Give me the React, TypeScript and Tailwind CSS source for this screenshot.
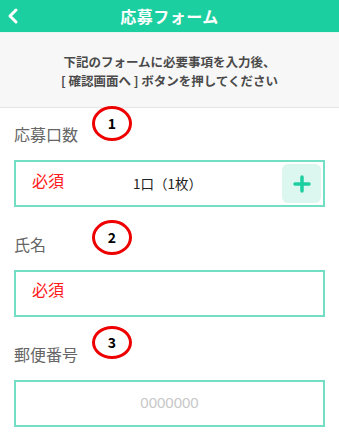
import { ChevronLeft, Plus } from "lucide-react";

const font = {
	fontFamily: '"Noto Sans CJK JP", "Noto Sans", sans-serif',
};

const Marker = ({ n, className }: { n: number; className: string }) => (
	<div
		className={`absolute flex items-center justify-center w-[40px] rounded-[50%] border-[3px] border-[#ee0000] bg-white text-[14px] font-bold text-black ${className}`}
	>
		{n}
	</div>
);

const Required = ({ top }: { top: string }) => (
	<span
		className={`absolute left-[16px] ${top} text-[16px] leading-[18px] text-[#ff1a1a]`}
	>
		必須
	</span>
);

export default function App() {
	return (
		<div className="w-[339px] h-[437px] overflow-hidden bg-white" style={font}>
			<header className="relative flex items-center justify-center h-[33px] bg-[#1ccfa0] border-b border-[#e6f6f1]">
				<ChevronLeft
					className="absolute left-[1px] top-[4px] text-white"
					size={24}
					strokeWidth={3}
				/>
				<h1 className="text-[16px] font-bold text-white tracking-[0.5px]">
					応募フォーム
				</h1>
			</header>

			<div className="flex flex-col items-center justify-center gap-[1px] h-[75px] bg-[#f7f7f7] border-b border-[#e6e6e6] pt-[2px] text-[12.5px] leading-[18px] font-semibold text-[#4a4a4a]">
				<p>下記のフォームに必要事項を入力後、</p>
				<p>[ 確認画面へ ] ボタンを押してください</p>
			</div>

			<div className="flex flex-col px-[14px]">
				<div className="relative mt-[14px] h-[24px] flex items-center">
					<span className="text-[16px] text-[#666]">応募口数</span>
					<Marker n={1} className="left-[78px] top-[-16px] h-[35px]" />
				</div>
				<div className="relative mt-[14px] h-[47px] border-2 border-[#72dfc4] flex items-center justify-center">
					<Required top="top-[9px]" />
					<span className="text-[13.5px] text-[#222] pr-[4px]">1口（1枚）</span>
					<button className="absolute right-[2px] top-[2px] w-[39px] h-[39px] rounded-md bg-[#dcf7ef] flex items-center justify-center">
						<Plus className="text-[#1ccfa0]" size={24} strokeWidth={3.5} />
					</button>
				</div>

				<div className="relative mt-[25px] h-[24px] flex items-center">
					<span className="text-[16px] text-[#666]">氏名</span>
					<Marker n={2} className="left-[78px] top-[-12px] h-[35px]" />
				</div>
				<div className="relative mt-[14px] h-[47px] border-2 border-[#72dfc4]">
					<Required top="top-[8px]" />
				</div>

				<div className="relative mt-[25px] h-[24px] flex items-center">
					<span className="text-[16px] text-[#666]">郵便番号</span>
					<Marker n={3} className="left-[78px] top-[-16px] h-[33px]" />
				</div>
				<div className="mt-[14px] h-[47px] border-2 border-[#72dfc4] flex items-center justify-center">
					<span
						className="text-[15px] text-[#c8c8c8]"
						style={{ fontFamily: '"Liberation Sans", sans-serif' }}
					>
						0000000
					</span>
				</div>
			</div>
		</div>
	);
}
